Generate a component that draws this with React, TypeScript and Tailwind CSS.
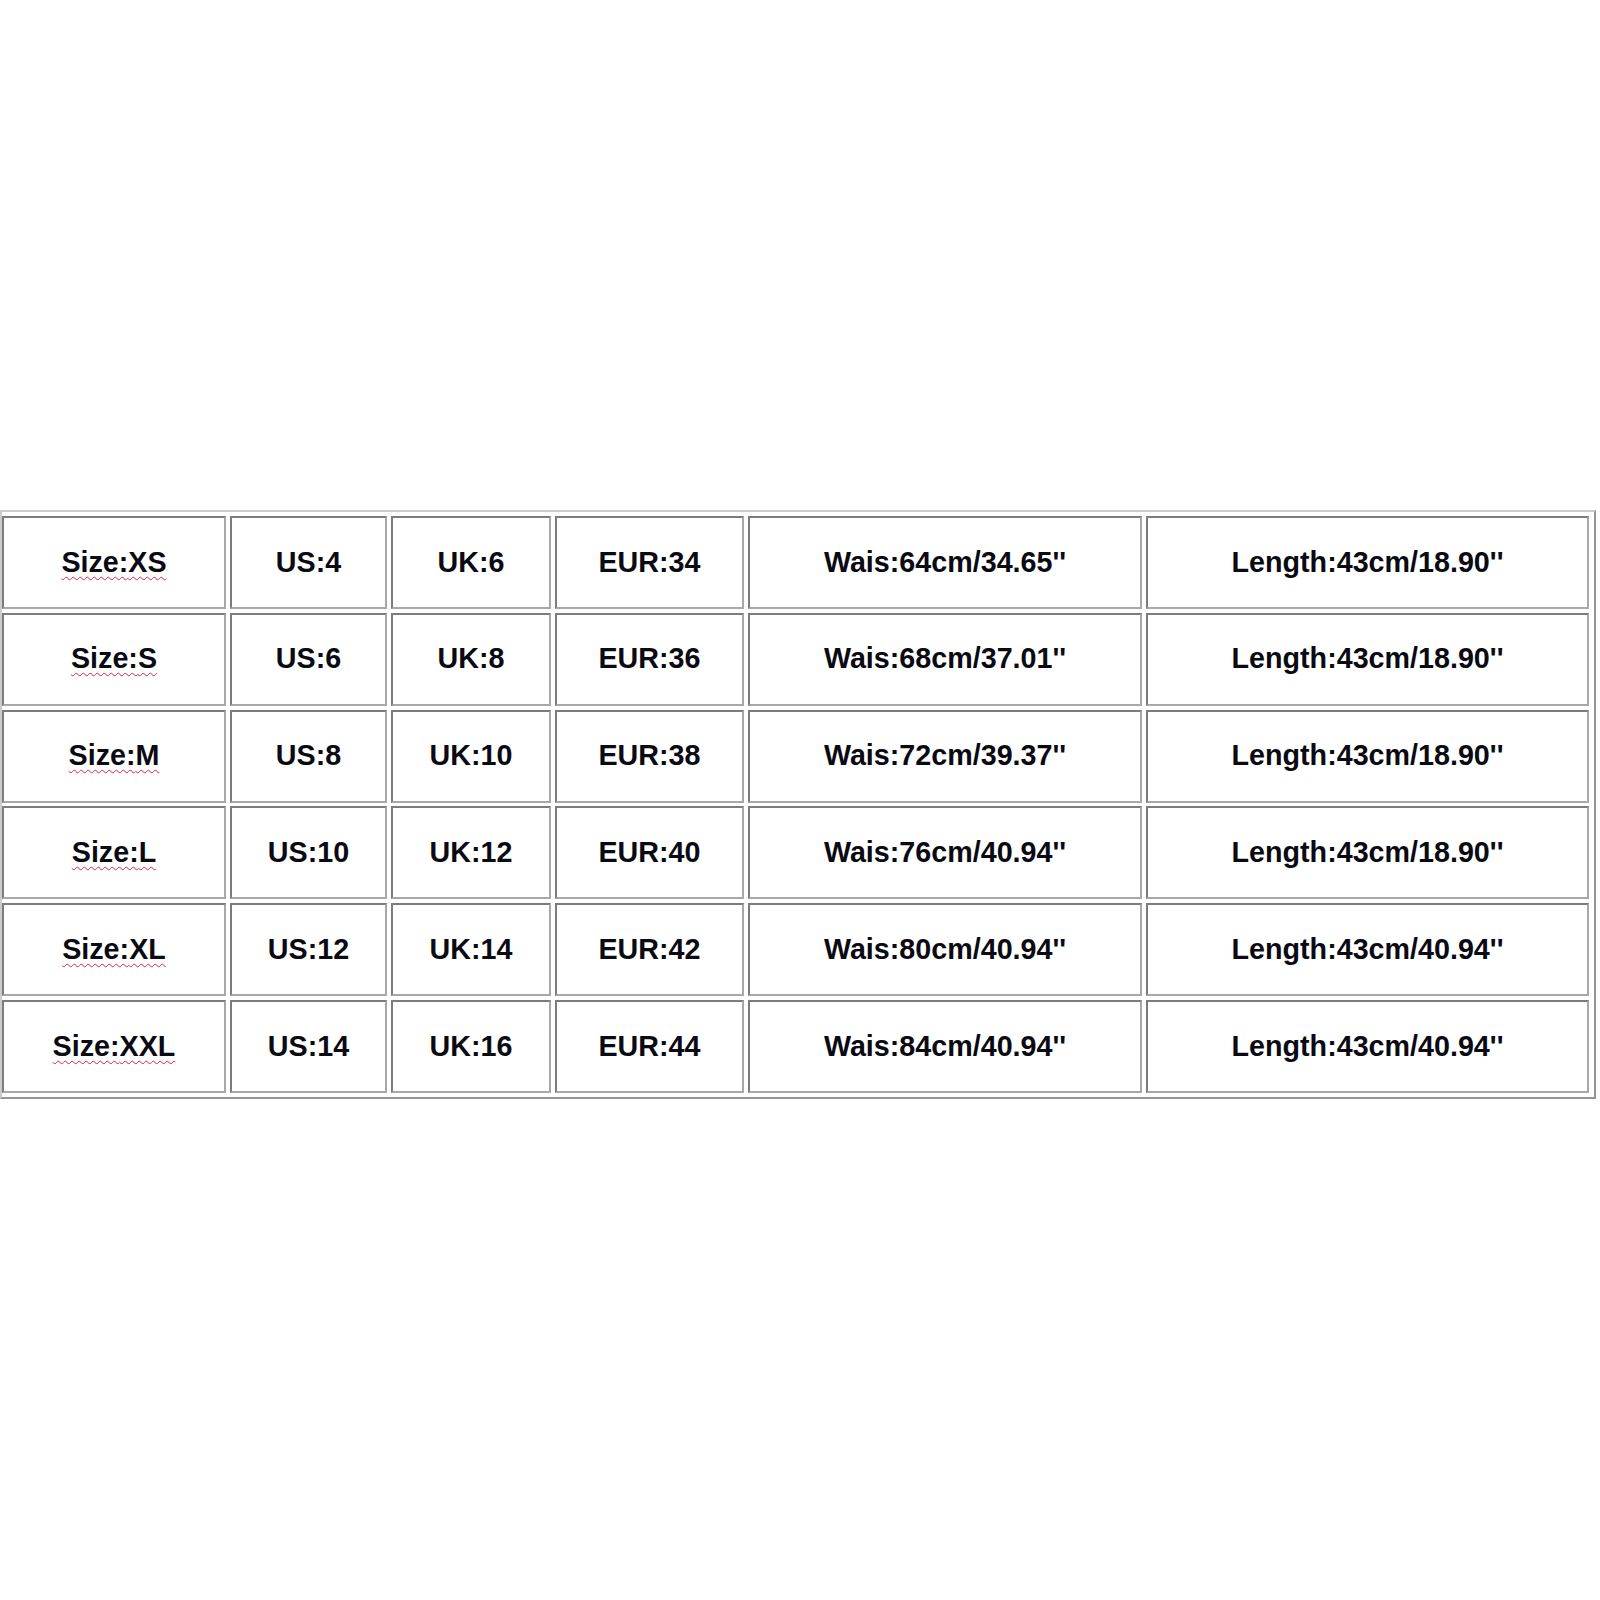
import React from "react";

const rows = [
  ["XS", "US:4", "UK:6", "EUR:34", "Wais:64cm/34.65''", "Length:43cm/18.90''"],
  ["S", "US:6", "UK:8", "EUR:36", "Wais:68cm/37.01''", "Length:43cm/18.90''"],
  ["M", "US:8", "UK:10", "EUR:38", "Wais:72cm/39.37''", "Length:43cm/18.90''"],
  ["L", "US:10", "UK:12", "EUR:40", "Wais:76cm/40.94''", "Length:43cm/18.90''"],
  ["XL", "US:12", "UK:14", "EUR:42", "Wais:80cm/40.94''", "Length:43cm/40.94''"],
  ["XXL", "US:14", "UK:16", "EUR:44", "Wais:84cm/40.94''", "Length:43cm/40.94''"],
];

function Cell({ children }: { children: React.ReactNode }) {
  return (
    <div className="flex h-[93px] items-center justify-center border-2 border-t-[#7c7c7c] border-l-[#7c7c7c] border-b-[#a8a8a8] border-r-[#a8a8a8] bg-white pb-[1px]">
      {children}
    </div>
  );
}

export default function App() {
  return (
    <div
      className="min-h-[1600px] w-[1600px] bg-white pt-[510px] text-[#0a0a12]"
      style={{ fontFamily: '"Liberation Sans", Arial, sans-serif' }}
    >
      <div className="w-[1596px] border-2 border-t-[#cccccc] border-l-[#cccccc] border-b-[#959595] border-r-[#959595] pt-[4px] pb-[4px] pr-[4px]">
        <div className="grid grid-cols-[224px_157px_160px_189px_394px_443px] gap-x-[4px] gap-y-[3.8px] text-[28.7px] font-bold leading-none">
          {rows.map((r, i) => (
            <React.Fragment key={i}>
              <Cell>
                <span className="underline decoration-wavy decoration-[#d2284a] decoration-[1.2px] underline-offset-[4px]">
                  Size:{r[0]}
                </span>
              </Cell>
              <Cell>{r[1]}</Cell>
              <Cell>{r[2]}</Cell>
              <Cell>{r[3]}</Cell>
              <Cell>{r[4]}</Cell>
              <Cell>{r[5]}</Cell>
            </React.Fragment>
          ))}
        </div>
      </div>
    </div>
  );
}
